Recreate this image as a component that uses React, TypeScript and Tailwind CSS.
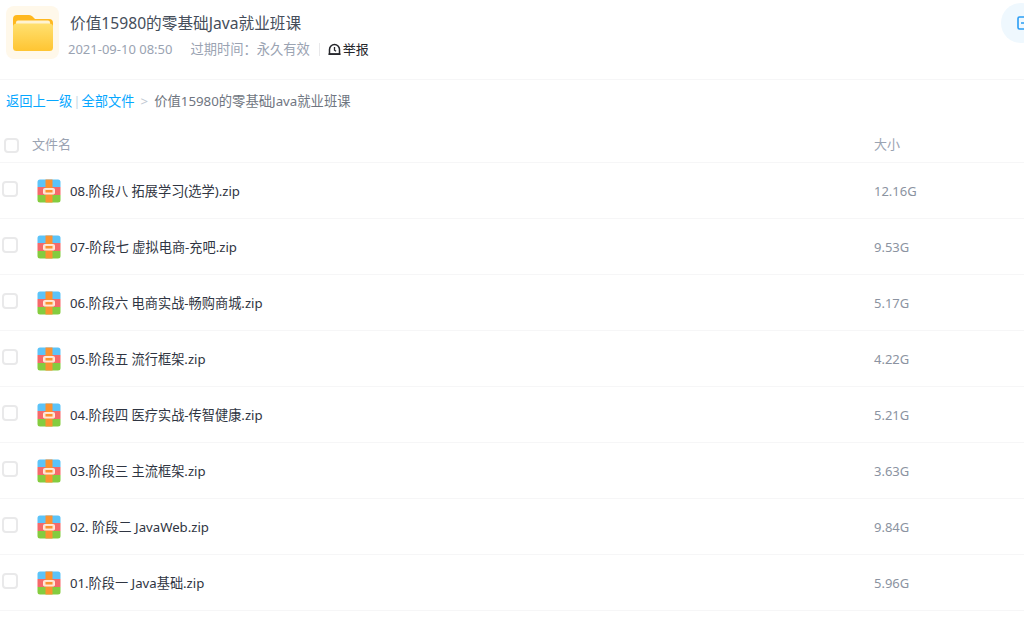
const FONT = "font-['Noto_Sans','Noto_Sans_CJK_SC',sans-serif]";

const files = [
  ["08.阶段八 拓展学习(选学).zip", "12.16G"],
  ["07-阶段七 虚拟电商-充吧.zip", "9.53G"],
  ["06.阶段六 电商实战-畅购商城.zip", "5.17G"],
  ["05.阶段五 流行框架.zip", "4.22G"],
  ["04.阶段四 医疗实战-传智健康.zip", "5.21G"],
  ["03.阶段三 主流框架.zip", "3.63G"],
  ["02. 阶段二 JavaWeb.zip", "9.84G"],
  ["01.阶段一 Java基础.zip", "5.96G"],
];

function ZipIcon() {
  return (
    <svg width="24" height="24" viewBox="0 0 24 24" className="shrink-0">
      <defs>
        <clipPath id="zipclip">
          <rect x="0.5" y="0.5" width="23" height="23" rx="2.5" />
        </clipPath>
      </defs>
      <g clipPath="url(#zipclip)">
        <rect width="24" height="8" fill="#5cc3f8" />
        <rect y="8" width="24" height="8" fill="#f5696a" />
        <rect y="16" width="24" height="8" fill="#84cc3f" />
        <rect x="8.5" width="7" height="24" fill="#fb9230" />
      </g>
      <rect x="6.500" y="9.500" width="11" height="5.500" rx="1" fill="#ffe3cf" stroke="#ffe9da" />
      <rect x="8.500" y="11" width="7" height="2.500" fill="#fb9230" />
    </svg>
  );
}

function FolderIcon() {
  return (
    <svg width="40" height="36" viewBox="0 0 40 36">
      <defs>
        <linearGradient id="folderbody" x1="0" y1="0" x2="0" y2="1">
          <stop offset="0" stopColor="#ffe070" />
          <stop offset="1" stopColor="#ffc532" />
        </linearGradient>
      </defs>
      <path d="M0 4a4 4 0 0 1 4-4h12c2 0 3 1 4 2l2 2h14a4 4 0 0 1 4 4v6H0z" fill="#ffb81f" />
      <rect x="3" y="5.500" width="34" height="8" rx="2" fill="#fff3d2" />
      <rect y="8.500" width="40" height="27.500" rx="3.500" fill="url(#folderbody)" />
    </svg>
  );
}

function Box({ className }: { className: string }) {
  return <div className={`rounded-[4px] border-2 border-[#e9e9ea] bg-white ${className}`} />;
}

function ReportIcon() {
  return (
    <svg width="13" height="13" viewBox="0 0 13 13" fill="none" className="shrink-0">
      <path d="M1.500 11V6.500a5 5 0 0 1 10 0V11z" stroke="#25262b" strokeWidth="1.500" />
      <path d="M0.500 11.200h12" stroke="#25262b" strokeWidth="1.500" />
      <path d="M6.500 4v3.200l1.600 1" stroke="#25262b" strokeWidth="1.300" />
    </svg>
  );
}

function SaveIcon() {
  return (
    <svg width="12" height="14" viewBox="0 0 12 14" fill="none">
      <path d="M12 1H2.500A1.500 1.500 0 0 0 1 2.500V11.500A1.500 1.500 0 0 0 2.500 13H9l3-2" stroke="#2a9df4" strokeWidth="1.600" />
      <path d="M4 7h6M7.500 4.500 10.500 7l-3 2.500" stroke="#2a9df4" strokeWidth="1.600" />
    </svg>
  );
}

export default function App() {
  return (
    <div className={`relative h-[641px] w-[1024px] overflow-hidden bg-white ${FONT}`}>
      <div className="absolute left-[1001px] top-[3px] flex h-[40px] w-[40px] items-center justify-start rounded-full bg-[#eff8fe] pl-[16px]">
        <SaveIcon />
      </div>

      <header className="flex h-[80px] items-start border-b border-[#f6f6f7] pl-[6px] pt-[6px]">
        <div className="flex h-[53px] w-[53px] shrink-0 items-center justify-center rounded-[8px] bg-[#fff8ea]">
          <FolderIcon />
        </div>
        <div className="ml-[9px] flex flex-col">
          <h1 className="ml-[2px] mt-[5px] h-[24px] text-[15.66px] font-normal leading-[24px] text-[#454d5a]">
            价值15980的零基础Java就业班课
          </h1>
          <div className="mt-[4px] flex h-[20px] items-center text-[13px] leading-[20px] text-[#9aa3b2]">
            <span>2021-09-10 08:50</span>
            <span className="ml-[18px] text-[13.25px]">过期时间：永久有效</span>
            <span className="ml-[9px] h-[13px] w-px bg-[#e8e8ea]" />
            <span className="ml-[8px] flex items-center gap-[2px] text-[#25262b]">
              <ReportIcon />
              举报
            </span>
          </div>
        </div>
      </header>

      <nav className="flex h-[45px] items-center pb-[2px] pl-[6px] text-[13.25px] text-[#06a7ff]">
        <span>返回上一级</span>
        <span className="mx-[1px] text-[#c6d8e6]">|</span>
        <span>全部文件</span>
        <span className="mx-[6px] text-[#c0c8d2]">&gt;</span>
        <span className="text-[13.3px] text-[#6f7681]">价值15980的零基础Java就业班课</span>
      </nav>

      <div className="flex h-[38px] items-center border-b border-[#f6f6f7] pt-[3px] text-[13px] text-[#9aa3b2]">
        <Box className="ml-[4px] h-[15px] w-[15px]" />
        <span className="ml-[13px]">文件名</span>
        <span className="absolute left-[874px]">大小</span>
      </div>

      {files.map(([name, size]) => (
        <div key={name} className="relative flex h-[56px] items-center border-b border-[#f6f6f7]">
          <Box className="mb-[4px] ml-[2px] h-[16px] w-[16px]" />
          <div className="ml-[19px]">
            <ZipIcon />
          </div>
          <span className="ml-[9px] mt-[2px] text-[13.2px] text-[#2f3542]">{name}</span>
          <span className="absolute left-[874px] mt-[2px] text-[13px] text-[#8b93a1]">{size}</span>
        </div>
      ))}
    </div>
  );
}
